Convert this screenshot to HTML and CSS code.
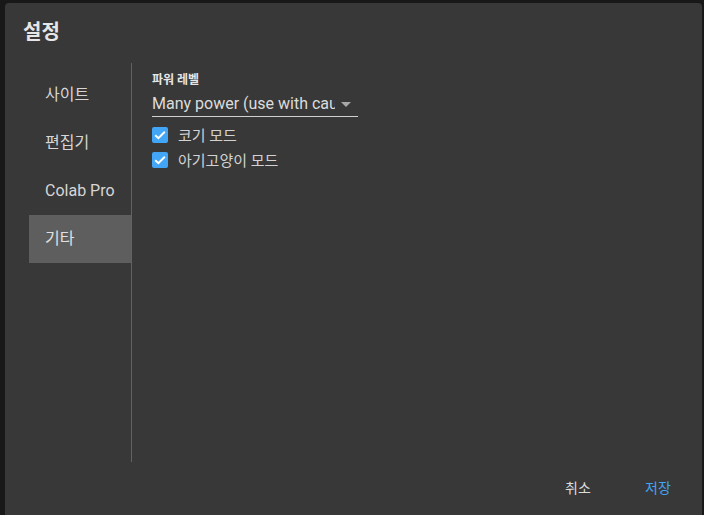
FILE: index.html
```html
<!DOCTYPE html>
<html lang="ko">
<head>
<meta charset="utf-8">
<link rel="stylesheet" href="styles.css">
</head>
<body>
<div class="dialog">
  <h1 class="title">설정</h1>
  <div class="body">
    <nav class="nav">
      <div class="nav-item">사이트</div>
      <div class="nav-item">편집기</div>
      <div class="nav-item">Colab Pro</div>
      <div class="nav-item active">기타</div>
    </nav>
    <div class="divider"></div>
    <section class="content">
      <div class="field-label">파워 레벨</div>
      <div class="select">
        <span class="select-text">Many power (use with caution)</span>
        <svg class="arrow" width="10" height="5" viewBox="0 0 10 5"><path d="M0 0 L10 0 L5 5 Z" fill="#a8a8a8"/></svg>
      </div>
      <label class="check-row first">
        <span class="box"><svg width="16" height="16" viewBox="0 0 16 16"><path d="M3.2 8.2 L6.4 11.2 L12.8 4.8" fill="none" stroke="#fff" stroke-width="2"/></svg></span>
        <span class="check-label">코기 모드</span>
      </label>
      <label class="check-row">
        <span class="box"><svg width="16" height="16" viewBox="0 0 16 16"><path d="M3.2 8.2 L6.4 11.2 L12.8 4.8" fill="none" stroke="#fff" stroke-width="2"/></svg></span>
        <span class="check-label">아기고양이 모드</span>
      </label>
    </section>
  </div>
  <div class="footer">
    <button class="btn">취소</button>
    <button class="btn primary">저장</button>
  </div>
</div>
</body>
</html>
```
FILE: styles.css
```css
html, body {
  margin: 0;
  padding: 0;
  height: 100%;
  overflow: hidden;
}
body {
  background: #181818;
  font-family: Roboto, "Noto Sans CJK KR", sans-serif;
  padding: 3px 2px 0 5px;
  box-sizing: border-box;
}
.dialog {
  background: #383838;
  border-radius: 4px 4px 0 0;
  height: 540px;
  display: flex;
  flex-direction: column;
}
.title {
  margin: 0;
  padding: 13px 0 0 18px;
  font-size: 20px;
  line-height: 32px;
  font-weight: 700;
  color: #e6e6e6;
}
.body {
  margin-top: 15px;
  display: flex;
  height: 399px;
}
.nav {
  margin-left: 24px;
  width: 102px;
  padding-top: 8px;
}
.nav-item {
  height: 48px;
  line-height: 48px;
  padding-left: 16px;
  font-size: 16px;
  color: #d6d6d6;
}
.nav-item.active {
  background: #5e5e5e;
  color: #e0e0e0;
}
.divider {
  width: 1px;
  background: #626262;
}
.content {
  padding-left: 20px;
}
.field-label {
  margin-top: 9px;
  font-size: 12px;
  line-height: 16px;
  font-weight: 700;
  color: #e6e6e6;
}
.select {
  margin-top: 4px;
  width: 206px;
  height: 24px;
  border-bottom: 1px solid #d0d0d0;
  display: flex;
  align-items: center;
  box-sizing: content-box;
}
.select-text {
  width: 183px;
  overflow: hidden;
  white-space: nowrap;
  font-size: 16px;
  line-height: 20px;
  color: #dcdcdc;
}
.arrow {
  margin-left: 6px;
}
.check-row {
  display: flex;
  align-items: center;
  height: 25px;
}
.check-row.first {
  margin-top: 5px;
}
.box {
  width: 16px;
  height: 16px;
  border-radius: 2px;
  background: #42a5f5;
  display: flex;
}
.check-label {
  margin-left: 10px;
  font-size: 15px;
  color: #d2d2d2;
}
.footer {
  display: flex;
  justify-content: flex-end;
  gap: 16px;
  padding: 7px 12px 0 0;
}
.btn {
  min-width: 64px;
  height: 36px;
  padding: 0 8px;
  border: none;
  background: transparent;
  font-family: Roboto, "Noto Sans CJK KR", sans-serif;
  font-size: 14px;
  color: #dcdcdc;
}
.btn.primary {
  color: #42a5f5;
}
```
